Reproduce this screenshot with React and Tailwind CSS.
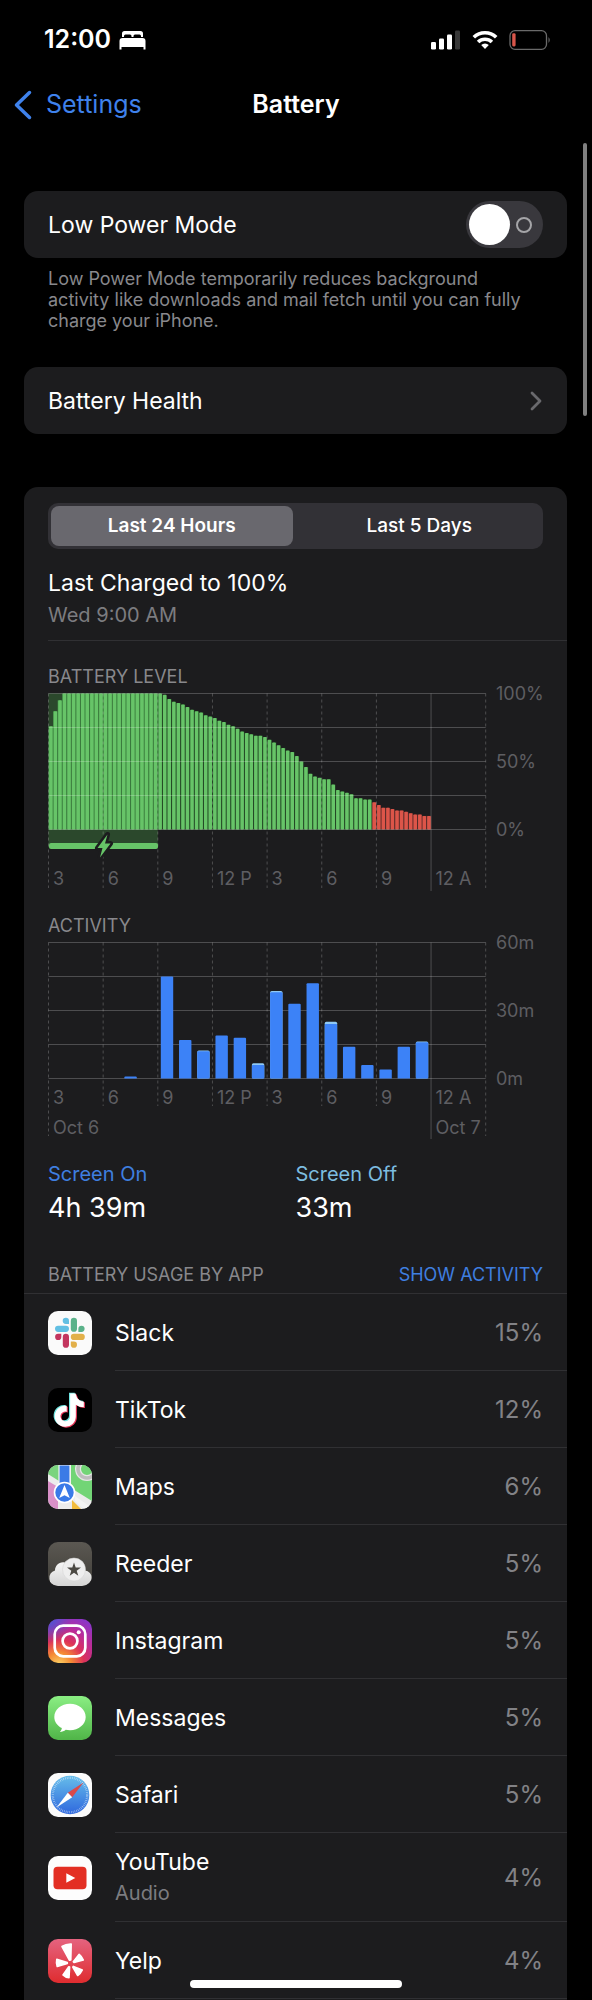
import React, { useId, useState } from 'react';

const HOURS = ['3', '6', '9', '12 P', '3', '6', '9', '12 A'];
const GRID_X = 0.5;
const GRID_Y = 4.5;
const COL = 54.65;
const ROW = 34;
const BASE = GRID_Y + ROW * 4;

// battery percentage, one reading per 15 minutes
const LEVELS = [
    76, 87, 95, ...Array(22).fill(100),
    99, 96, 94, 93, 92, 90, 88, 87, 86, 84, 83, 82, 80, 79, 77, 76, 74, 72, 71, 70, 69, 69, 68,
    66, 64, 62, 60, 58, 57, 54, 50, 46, 41, 39, 38, 37, 37, 33, 29, 28, 27, 26, 23, 23, 22, 22,
    20, 18, 16, 16, 15, 14, 14, 13, 12, 11, 11, 10, 10,
];

// minutes per hour, split into screen on and screen off
const ACTIVITY = [
    [0, 0], [0, 0], [0, 0], [0, 0], [0.9, 0], [0, 0],
    [45, 0], [17, 0], [12, 0.3], [19, 0], [18, 0], [6, 0.7],
    [38, 0.6], [33, 0], [42, 0], [24, 1], [14, 0], [6, 0],
    [4, 0], [14, 0], [16, 0.3],
];

function Grid({ bottom, ends }) {
    return (
        <g stroke="#fff" strokeOpacity="0.22" strokeWidth="1">
            {[0, 1, 2, 3, 4].map((i) => (
                <line key={i} x1={GRID_X} x2={GRID_X + COL * 8} y1={GRID_Y + ROW * i} y2={GRID_Y + ROW * i} />
            ))}
            {[0, 1, 2, 3, 4, 5, 6, 7, 8].map((i) => (
                <line
                    key={i}
                    x1={GRID_X + COL * i}
                    x2={GRID_X + COL * i}
                    y1={GRID_Y}
                    y2={i === 7 ? ends + 3 : i === 0 || i === 8 ? ends : bottom}
                    strokeDasharray={i === 7 ? undefined : '3 3'}
                />
            ))}
        </g>
    );
}

function AxisLabels({ hourY, sides }) {
    return (
        <g fill="#5e5e62" fontSize="18">
            {HOURS.map((hour, i) => (
                <text key={i} x={5 + COL * i} y={hourY}>{hour}</text>
            ))}
            {sides.map((side, i) => (
                <text key={side} x="448" y={GRID_Y + ROW * 2 * i + 6}>{side}</text>
            ))}
        </g>
    );
}

function BatteryLevelChart() {
    return (
        <svg viewBox="0 0 495 202" className="block w-full overflow-visible" role="img" aria-label="Battery level">
            <rect x={GRID_X} y={GRID_Y} width={COL * 2} height="154" fill="#2b482c" />
            {LEVELS.map((level, i) => {
                const height = (level / 100) * ROW * 4;
                return (
                    <g key={i}>
                        <rect
                            x={GRID_X + i * 4.555}
                            y={BASE - height}
                            width="4.6"
                            height={height}
                            fill={i < 24 ? '#3f8742' : i < 71 ? '#275529' : '#69302d'}
                        />
                        <rect
                            x={GRID_X + 0.6 + i * 4.555}
                            y={BASE - height}
                            width="3.5"
                            height={height}
                            rx="0.8"
                            fill={i < 71 ? '#67c468' : '#dc5549'}
                        />
                    </g>
                );
            })}
            <Grid bottom={199} ends={199} />
            <rect x="1" y="154" width="109" height="6" rx="2" fill="#67c468" />
            <path
                d="M59.5 145.5 L49.5 159 H54.5 L52 168.5 L62.5 154.5 H57 Z"
                fill="#67c468"
                stroke="#1c1c1e"
                strokeWidth="5"
                strokeLinejoin="round"
                paintOrder="stroke"
            />
            <AxisLabels hourY={196} sides={['100%', '50%', '0%']} />
        </svg>
    );
}

function ActivityChart() {
    return (
        <svg viewBox="0 0 495 202" className="block w-full overflow-visible" role="img" aria-label="Activity">
            <Grid bottom={168} ends={198} />
            {ACTIVITY.map(([on, off], i) => {
                if (!on) return null;
                const scale = (ROW * 4) / 60;
                const x = GRID_X + 3 + (i * COL) / 3;
                const total = (on + off) * scale;
                return (
                    <g key={i}>
                        {off > 0 && <rect x={x} y={BASE - total} width="12.4" height={total} rx="1.5" fill="#8fc9f5" />}
                        <path
                            d={`M${x} ${BASE}V${BASE - on * scale + 1}q0-1 1-1h10.4q1 0 1 1V${BASE}z`}
                            fill="#3c82f7"
                        />
                    </g>
                );
            })}
            <AxisLabels hourY={166} sides={['60m', '30m', '0m']} />
            <g fill="#5e5e62" fontSize="18">
                <text x="5" y="196">Oct 6</text>
                <text x={5 + COL * 7} y="196">Oct 7</text>
            </g>
        </svg>
    );
}

function SlackIcon() {
    return (
        <>
            <rect width="44" height="44" fill="#fafafa" />
            <g fill="#62bfe3">
                <rect x="7" y="14.7" width="14" height="6.2" rx="3.1" />
                <path d="M21 13h-3.1a3.15 3.15 0 1 1 3.1-3.1z" />
            </g>
            <g fill="#5bb28a">
                <rect x="22.8" y="6.8" width="6.2" height="14" rx="3.1" />
                <path d="M30.4 20.9v-3.1a3.1 3.1 0 1 1 3.1 3.1z" />
            </g>
            <g fill="#c3365f">
                <rect x="14.8" y="22.8" width="6.2" height="14" rx="3.1" />
                <path d="M13.3 22.8v3.1a3.1 3.1 0 1 1-3.1-3.1z" />
            </g>
            <g fill="#e2b04a">
                <rect x="22.8" y="22.8" width="14" height="6.2" rx="3.1" />
                <path d="M22.8 30.6h3.1a3.1 3.1 0 1 1-3.1 3.1z" />
            </g>
        </>
    );
}

const NOTE = 'M448,209.91a210.06,210.06,0,0,1-122.77-39.25V349.38A162.55,162.55,0,1,1,185,188.31V278.2a74.62,74.62,0,1,0,52.23,71.18V0l88,0a121.18,121.18,0,0,0,1.86,22.17h0A122.18,122.18,0,0,0,381,102.39a121.43,121.43,0,0,0,67,20.14Z';

function TikTokIcon() {
    return (
        <>
            <rect width="44" height="44" fill="#000" />
            <path d={NOTE} fill="#6fe5e1" transform="translate(5.6 4.8) scale(.065)" />
            <path d={NOTE} fill="#e8385a" transform="translate(7.8 6.4) scale(.065)" />
            <path d={NOTE} fill="#fff" transform="translate(6.7 5.6) scale(.065)" />
        </>
    );
}

function MapsIcon() {
    return (
        <>
            <rect width="44" height="44" fill="#ececec" />
            <path d="M0 0H11V16L0 9Z" fill="#7bd47f" />
            <path d="M23 0H44V36L23 23Z" fill="#72d576" />
            <circle cx="39" cy="4" r="9" fill="#72d576" stroke="#e5e5e5" strokeWidth="6" />
            <circle cx="39" cy="4" r="9" fill="none" stroke="#bdbdbd" strokeWidth="3.5" />
            <path d="M0 16L10 22V44H0Z" fill="#d990c8" />
            <path d="M24 35L33 44H24Z" fill="#f3bd3d" />
            <path d="M27 31L44 43V44H36L27 36Z" fill="#f4f4f4" />
            <path d="M11 0H22V22H11Z" fill="#3b7be6" stroke="#f3f3f3" strokeWidth="1.2" />
            <circle cx="16.5" cy="27.5" r="10" fill="#3a7ae8" stroke="#fff" strokeWidth="1.6" />
            <path d="M16.5 20L21.8 33L16.5 30.2L11.2 33Z" fill="#fff" />
        </>
    );
}

function ReederIcon({ id }) {
    return (
        <>
            <defs>
                <linearGradient id={id} x1="0" y1="0" x2="0" y2="1">
                    <stop offset="0" stopColor="#5b5852" />
                    <stop offset="1" stopColor="#403e39" />
                </linearGradient>
                <linearGradient id={`${id}c`} x1="0" y1="0" x2="0" y2="1">
                    <stop offset="0" stopColor="#f6f6f6" />
                    <stop offset="1" stopColor="#d4d4d4" />
                </linearGradient>
            </defs>
            <rect width="44" height="44" fill={`url(#${id})`} />
            <path d="M8 44a8 8 0 0 1-1-15.500C7 24 11 19.500 16.500 20.500H26L37 28.500a7.800 7.800 0 0 1 0 15.500z" fill={`url(#${id}c)`} />
            <circle cx="26" cy="27.5" r="11.5" fill="#eee" stroke="#d2d2d2" strokeWidth="0.5" />
            <path d="M26 20.5l1.7 5h5.3l-4.3 3.2 1.6 5.1-4.3-3.1-4.3 3.1 1.6-5.1-4.3-3.2h5.3z" fill="#4b4943" />
        </>
    );
}

function InstagramIcon({ id }) {
    return (
        <>
            <defs>
                <radialGradient id={id} cx="0.25" cy="1.05" r="1.15">
                    <stop offset="0" stopColor="#fbd768" />
                    <stop offset="0.25" stopColor="#f58a35" />
                    <stop offset="0.5" stopColor="#dd3258" />
                    <stop offset="0.75" stopColor="#b92c9b" />
                    <stop offset="1" stopColor="#8d35c6" />
                </radialGradient>
                <radialGradient id={`${id}b`} cx="0" cy="0" r="0.55">
                    <stop offset="0" stopColor="#4158d8" />
                    <stop offset="1" stopColor="#4158d8" stopOpacity="0" />
                </radialGradient>
            </defs>
            <rect width="44" height="44" fill={`url(#${id})`} />
            <rect width="44" height="44" fill={`url(#${id}b)`} />
            <g fill="none" stroke="#fff" strokeWidth="2.7">
                <rect x="6.7" y="6.7" width="30.6" height="30.6" rx="8.5" />
                <circle cx="22" cy="22" r="7.4" />
            </g>
            <circle cx="30.7" cy="13.3" r="2" fill="#fff" />
        </>
    );
}

function MessagesIcon({ id }) {
    return (
        <>
            <defs>
                <linearGradient id={id} x1="0" y1="0" x2="0" y2="1">
                    <stop offset="0" stopColor="#8aee83" />
                    <stop offset="1" stopColor="#50b548" />
                </linearGradient>
            </defs>
            <rect width="44" height="44" fill={`url(#${id})`} />
            <path d="M22 7.8c8.7 0 15.7 5.9 15.7 13.2S30.700 34.200 22 34.200c-1.500 0-2.900-.2-4.300-.5-1.500 1.300-3.600 2.100-5.900 2.200 1.300-1.100 2-2.400 2-3.800C9.300 29.800 6.300 25.700 6.300 21 6.300 13.700 13.300 7.800 22 7.800z" fill="#fff" />
        </>
    );
}

function SafariIcon({ id }) {
    return (
        <>
            <defs>
                <linearGradient id={id} x1="0" y1="0" x2="0" y2="1">
                    <stop offset="0" stopColor="#66bdea" />
                    <stop offset="1" stopColor="#2f68de" />
                </linearGradient>
            </defs>
            <rect width="44" height="44" fill="#fbfbfb" />
            <circle cx="22" cy="22" r="19.3" fill={`url(#${id})`} />
            <circle cx="22" cy="22" r="17.2" fill="none" stroke="#fff" strokeOpacity="0.7" strokeWidth="2.2" strokeDasharray="0.5 1.3" />
            <path d="M35.5 9.5L24.2 24.2L19.8 19.8Z" fill="#db4a4a" />
            <path d="M8.5 34.5L19.8 19.8L24.2 24.2Z" fill="#fff" />
        </>
    );
}

function YouTubeIcon() {
    return (
        <>
            <rect width="44" height="44" fill="#fdfdfd" />
            <rect x="5.5" y="10.7" width="33" height="22.6" rx="4" fill="#e32f23" />
            <path d="M18.3 17.3L27.3 22L18.3 26.7Z" fill="#fff" />
        </>
    );
}

function YelpIcon({ id }) {
    return (
        <>
            <defs>
                <linearGradient id={id} x1="0" y1="0" x2="0" y2="1">
                    <stop offset="0" stopColor="#e5637f" />
                    <stop offset="1" stopColor="#df2c2f" />
                </linearGradient>
            </defs>
            <rect width="44" height="44" fill={`url(#${id})`} />
            <g fill="#fff" stroke="#fff" strokeWidth="1.6" strokeLinejoin="round">
                <path d="M14 7.5Q18 4.8 23.2 5L22.8 21L21.5 21.3Z" />
                <path d="M8.8 20.2Q8 24 9.2 27.5L19.3 24.5V23.5Z" />
                <path d="M15 36Q17.5 38.6 21 38.7L21.6 28L20.8 27.7Z" />
                <path d="M34.3 31Q32.7 34.6 29.7 36.5L24.8 28L25.4 27.4Z" />
                <path d="M31.2 15.3Q34 17.5 35.3 21L26 23.4L25.3 22.7Z" />
            </g>
        </>
    );
}

function AppIcon({ icon: Icon }) {
    const id = useId();
    return (
        <svg viewBox="0 0 44 44" className="size-11 shrink-0 rounded-[10px]" aria-hidden="true">
            <Icon id={id} />
        </svg>
    );
}

const APPS = [
    { name: 'Slack', usage: '15%', icon: SlackIcon },
    { name: 'TikTok', usage: '12%', icon: TikTokIcon },
    { name: 'Maps', usage: '6%', icon: MapsIcon },
    { name: 'Reeder', usage: '5%', icon: ReederIcon },
    { name: 'Instagram', usage: '5%', icon: InstagramIcon },
    { name: 'Messages', usage: '5%', icon: MessagesIcon },
    { name: 'Safari', usage: '5%', icon: SafariIcon },
    { name: 'YouTube', detail: 'Audio', usage: '4%', icon: YouTubeIcon },
    { name: 'Yelp', usage: '4%', icon: YelpIcon },
];

function AppRow({ app }) {
    return (
        <li className="flex items-center gap-[23px] pl-6">
            <AppIcon icon={app.icon} />
            <div className={`flex flex-1 items-center justify-between border-b border-[#303033] pt-0.5 pr-6 ${app.detail ? 'h-[89px]' : 'h-[77px]'}`}>
                <div>
                    <p className="text-[23px] leading-[30px]">{app.name}</p>
                    {app.detail && <p className="text-xl leading-8 text-[#7c7c80]">{app.detail}</p>}
                </div>
                <span className="text-2xl text-[#828286]">{app.usage}</span>
            </div>
        </li>
    );
}

function StatusBar() {
    return (
        <div className="flex h-20 items-center justify-between pr-10 pl-11">
            <div className="flex items-center gap-2">
                <span className="text-[25px] font-semibold">12:00</span>
                <svg viewBox="0 0 27 20" className="h-5 w-[27px]" fill="#fff" aria-hidden="true">
                    <path d="M3 7V3.5Q3 1 5.5 1H21.5Q24 1 24 3.5V7H22V6Q22 4.5 20.5 4.5H16Q14.5 4.5 14.5 6V7H12.5V6Q12.5 4.5 11 4.5H6.5Q5 4.5 5 6V7Z" />
                    <path d="M0.5 19.5V11Q0.5 8 3.5 8H23.5Q26.5 8 26.5 11V19.5H24.5V17H2.5V19.5Z" />
                </svg>
            </div>
            <div className="flex items-center gap-[11px]">
                <svg viewBox="0 0 30 20" className="h-5 w-[30px]" fill="#fff" aria-hidden="true">
                    <rect x="0" y="12" width="5" height="7.5" rx="1.3" />
                    <rect x="8" y="8.5" width="5" height="11" rx="1.3" />
                    <rect x="16" y="4.5" width="5" height="15" rx="1.3" />
                    <rect x="24" y="0.5" width="5" height="19" rx="1.3" fill="#373737" />
                </svg>
                <svg viewBox="0 0 26 20" className="h-5 w-[26px]" fill="none" stroke="#fff" strokeWidth="3.6" aria-hidden="true">
                    <path d="M1.8 7.3A16 16 0 0 1 24.2 7.3" />
                    <path d="M6.1 12A9.9 9.9 0 0 1 19.9 12" />
                    <path d="M13 19L9.2 14.9A5.5 5.5 0 0 1 16.8 14.9Z" fill="#fff" stroke="none" />
                </svg>
                <svg viewBox="0 0 43 20" className="h-5 w-[43px]" aria-hidden="true">
                    <rect x="1" y="0.7" width="36.5" height="18.6" rx="5" fill="none" stroke="#6a6a6a" strokeWidth="1.3" />
                    <rect x="3.2" y="3.2" width="3.4" height="13.2" rx="1.3" fill="#d8564a" />
                    <path d="M39.5 7Q42 10 39.5 13Z" fill="#6a6a6a" />
                </svg>
            </div>
        </div>
    );
}

export default function App() {
    const [lowPower, setLowPower] = useState(false);
    const [range, setRange] = useState('24h');

    const tab = (active) =>
        `rounded-lg text-[19px] ${active ? 'bg-[#69686e] font-semibold' : 'font-medium'}`;

    return (
        <div className="relative flex min-h-screen flex-col overflow-hidden bg-black font-[Inter,'Liberation_Sans',sans-serif] text-white">
            <StatusBar />
            <header className="grid h-[50px] grid-cols-[1fr_auto_1fr] items-center px-3.5">
                <a href="#settings" className="flex items-center gap-3.5 text-[25px] text-[#3f82ec]">
                    <svg viewBox="0 0 18 30" className="h-[30px] w-[18px]" fill="none" stroke="currentColor" strokeWidth="3.5" strokeLinecap="round" strokeLinejoin="round" aria-hidden="true">
                        <path d="M15.5 2.5L2.5 15L15.5 27.5" />
                    </svg>
                    Settings
                </a>
                <h1 className="text-[25px] font-semibold">Battery</h1>
            </header>

            <main className="flex flex-1 flex-col pt-[61px] pr-[25px] pl-6">
                <label className="flex h-[67px] items-center justify-between rounded-[14px] bg-[#1c1c1e] px-6 text-[23px]">
                    <span className="pt-0.5">Low Power Mode</span>
                    <input
                        type="checkbox"
                        role="switch"
                        className="peer sr-only"
                        checked={lowPower}
                        onChange={(e) => setLowPower(e.target.checked)}
                    />
                    <span className="flex h-[47px] w-[77px] items-center justify-between rounded-full bg-[#39383d] pr-[11px] pl-[3px] peer-checked:flex-row-reverse peer-checked:bg-green-500 peer-focus-visible:outline-2">
                        <span className="size-[41px] rounded-full bg-white" />
                        <span className="size-4 rounded-full border-2 border-[#a5a5a8]" />
                    </span>
                </label>
                <p className="mt-2.5 pr-7 pl-6 text-lg leading-[21px] text-[#88888c]">
                    Low Power Mode temporarily reduces background activity like downloads and mail fetch until you can fully charge your iPhone.
                </p>

                <a href="#health" className="mt-9 flex h-[67px] items-center justify-between rounded-[14px] bg-[#1c1c1e] px-6 text-[23px]">
                    <span className="pt-0.5">Battery Health</span>
                    <svg viewBox="0 0 14 20" className="h-5 w-3.5" fill="none" stroke="#69696d" strokeWidth="2.8" strokeLinecap="round" strokeLinejoin="round" aria-hidden="true">
                        <path d="M3 2L11 10L3 18" />
                    </svg>
                </a>

                <section className="mt-[53px] flex-1 rounded-t-[14px] bg-[#1c1c1e] pt-4">
                    <div className="mx-6 grid h-[46px] grid-cols-2 gap-1.5 rounded-[10px] bg-[#323136] p-[3px]">
                        <button type="button" className={tab(range === '24h')} onClick={() => setRange('24h')}>
                            Last 24 Hours
                        </button>
                        <button type="button" className={tab(range === '5d')} onClick={() => setRange('5d')}>
                            Last 5 Days
                        </button>
                    </div>

                    <div className="mt-[19px] ml-6 border-b border-[#303033] pb-3">
                        <p className="text-[23px] leading-[30px]">Last Charged to 100%</p>
                        <p className="mt-1 text-xl leading-[26px] text-[#7c7c80]">Wed 9:00 AM</p>
                    </div>

                    <div className="px-6 pt-6">
                        <h2 className="text-lg leading-6 text-[#88888c]">BATTERY LEVEL</h2>
                        <BatteryLevelChart />
                        <h2 className="mt-[23px] text-lg leading-6 text-[#88888c]">ACTIVITY</h2>
                        <ActivityChart />
                        <dl className="mt-[21px] grid grid-cols-2">
                            <div>
                                <dt className="text-xl leading-[26px] text-[#3f7fe0]">Screen On</dt>
                                <dd className="mt-1 text-[27px] leading-[34px]">4h 39m</dd>
                            </div>
                            <div>
                                <dt className="text-xl leading-[26px] text-[#7dbde0]">Screen Off</dt>
                                <dd className="mt-1 text-[27px] leading-[34px]">33m</dd>
                            </div>
                        </dl>
                    </div>

                    <div className="mt-[38px] flex items-center justify-between border-b border-[#303033] px-6 pb-1.5">
                        <h2 className="text-lg leading-6 text-[#88888c]">BATTERY USAGE BY APP</h2>
                        <button type="button" className="text-lg leading-6 text-[#3f7fe0]">SHOW ACTIVITY</button>
                    </div>
                    <ul>
                        {APPS.map((app) => (
                            <AppRow key={app.name} app={app} />
                        ))}
                    </ul>
                </section>
            </main>

            <div className="absolute top-[143px] right-[5px] h-[273px] w-1 rounded-full bg-[#808080]" />
            <div className="absolute bottom-3 left-1/2 h-2 w-[212px] -translate-x-1/2 rounded-full bg-white" />
        </div>
    );
}
